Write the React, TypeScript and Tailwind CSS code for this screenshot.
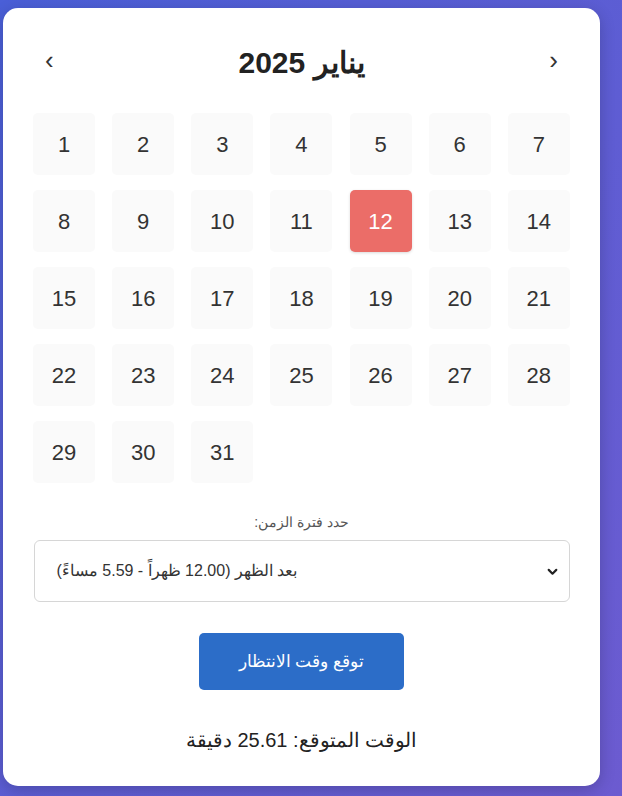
import React from 'react'

const font = { fontFamily: '"Liberation Sans", Arial, "Noto Sans", sans-serif' }

// --- Day cell ---

function DayCell({ day, selected }: { day: number; selected?: boolean }) {
  return (
    <div
      className={`h-[62px] w-[62px] flex items-center justify-center rounded-[5px] text-[22px] ${
        selected
          ? 'bg-[#eb6d68] text-white shadow-[0_1px_3px_rgba(0,0,0,0.15)]'
          : 'bg-[#fafafa] text-[#333]'
      }`}
    >
      {day}
    </div>
  )
}

// --- Chevron ---

function ChevronDown() {
  return (
    <svg width="13" height="13" viewBox="0 0 24 24" fill="none" stroke="#222" strokeWidth="4" strokeLinecap="round" strokeLinejoin="round">
      <polyline points="5 9 12 16 19 9" />
    </svg>
  )
}

export default function App() {
  const days = Array.from({ length: 31 }, (_, i) => i + 1)

  return (
    <div className="min-h-[796px] w-full bg-gradient-to-br from-[#4a5fd7] to-[#6c5bd0] pt-2 pl-[3px]" style={font}>
      <div className="w-[597px] h-[778px] bg-white rounded-[15px] shadow-[0_4px_16px_rgba(0,0,0,0.2)] px-[30px] pt-[28px]">
        {/* header */}
        <div className="flex items-center justify-between h-[52px] px-[12px]">
          <button className="text-[26px] leading-none text-[#333] pb-1">‹</button>
          <h2 dir="rtl" className="text-[30px] font-bold text-[#222]">
            يناير 2025
          </h2>
          <button className="text-[26px] leading-none text-[#333] pb-1">›</button>
        </div>

        {/* days */}
        <div className="grid grid-cols-7 gap-x-[17px] gap-y-[15px] mt-[25px]">
          {days.map((d) => (
            <DayCell key={d} day={d} selected={d === 12} />
          ))}
        </div>

        {/* time period */}
        <div className="mt-[29px] flex flex-col items-center">
          <label dir="rtl" className="text-[14px] text-[#555] leading-5">
            حدد فترة الزمن:
          </label>
          <div className="mt-[8px] w-[536px] h-[62px] border border-[#d6d6d6] rounded-[6px] flex items-center justify-between pl-[22px] pr-[10px] bg-white">
            <span dir="rtl" className="text-[16px] text-[#333]">
              بعد الظهر (12.00 ظهراً - 5.59 مساءً)
            </span>
            <ChevronDown />
          </div>
          <button
            dir="rtl"
            className="mt-[31px] w-[205px] h-[57px] rounded-[5px] bg-[#2c6dc8] text-white text-[17px]"
          >
            توقع وقت الانتظار
          </button>
          <p dir="rtl" className="mt-[35px] text-[20px] text-[#222]">
            الوقت المتوقع: 25.61 دقيقة
          </p>
        </div>
      </div>
    </div>
  )
}
